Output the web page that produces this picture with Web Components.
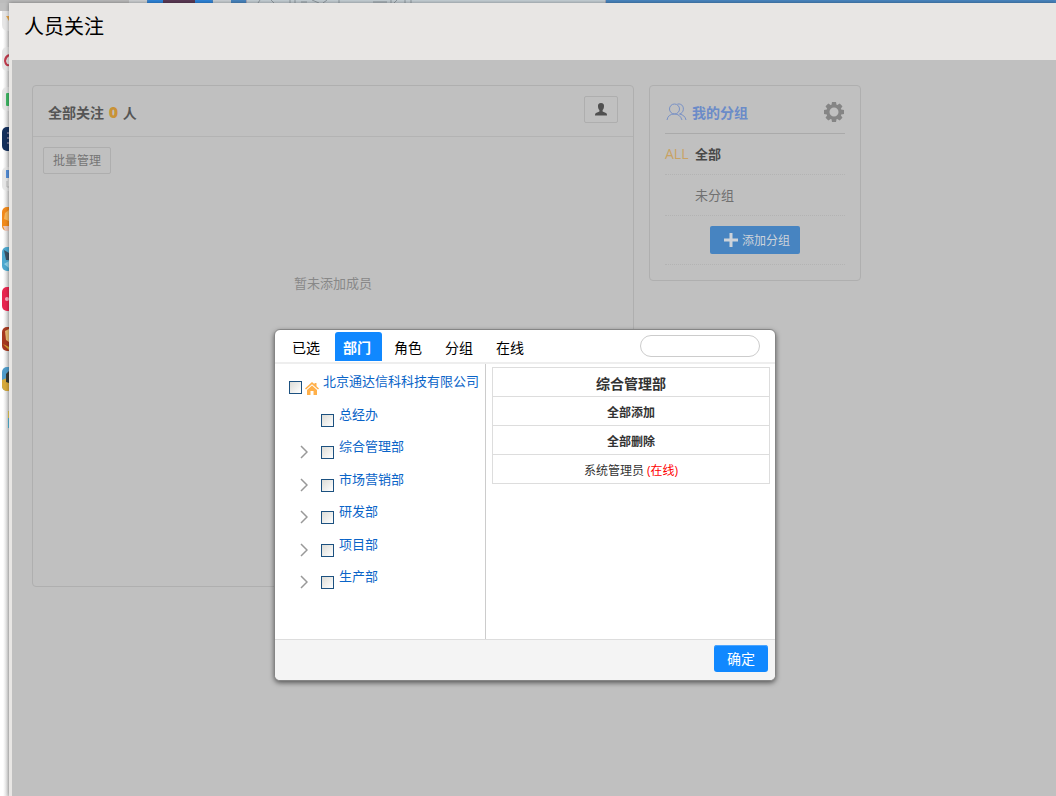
<!DOCTYPE html>
<html lang="zh-CN">
<head>
<meta charset="utf-8">
<title>人员关注</title>
<style>
html,body{margin:0;height:100%}
body{font-family:"Open Sans","Noto Sans CJK SC",sans-serif;background:#fff;color:#000}
</style>
</head>
<body>
<follow-page></follow-page>

<template id="t-page"><style>
:host{display:grid;grid-template:3px 1fr / 9px 1fr;min-height:100vh;overflow:hidden}
top-sliver{grid-column:1 / 3}
.win{display:flex;flex-direction:column;background:#e8e6e4;box-shadow:0 0 4px #0006;min-width:0}
h1{margin:0;padding:9px 15px 0;height:48px;font-size:20px;line-height:30px;font-weight:400}
.stage{position:relative;flex:1;display:flex;align-items:flex-start;gap:15px;margin-left:3px;padding:25px 20px;background:#c0c0c0}
follow-list{flex:0 1 602px}
group-panel{flex:0 0 212px}
person-picker{position:absolute;left:262px;top:269px}
</style>
<top-sliver></top-sliver>
<app-dock></app-dock>
<main class="win">
 <h1>人员关注</h1>
 <div class="stage"><follow-list></follow-list><group-panel></group-panel><person-picker></person-picker></div>
</main>
</template>

<template id="t-sliver"><style>
:host{display:flex;height:3px;background:#4a87c2}
.a{width:129px;background:#bcbcbc}.b{width:18px;background:#cfd2d4}
.c{width:66px}.d{width:18px;background:#ccd2d6}.e{width:15px;background:#4a87c2}
.f{width:358px;background:#c6d0d6;border:solid #aab;border-width:0 1px}
svg{display:block}
</style>
<div class="a"></div><div class="b"></div>
<svg class="c" width="66" height="3"><path d="M2 0H64L66 3H0Z" fill="#2f86dc"/><path d="M16 0H48V3H16Z" fill="#5c3a55"/></svg>
<div class="d"></div><div class="e"></div>
<div class="f"><svg width="200" height="3"><path d="M13 0L11 3M24 0L27 3M43 0V3M48 0V3M54 2H60M65 0L72 3M80 0L76 3M92 0V3M126 2H140M144 0V3M150 0L147 3M158 0V3M164 0V3" stroke="#929ba1" fill="none"/></svg></div>
</template>

<template id="t-dock"><style>
:host{display:block;background:linear-gradient(90deg,#fff 3px,#d2d2d2);overflow:hidden}
.cap{height:8px;background:#c0c0c0}
svg{display:block}
</style>
<div class="cap"></div>
<svg width="9" height="425" viewBox="0 11 9 425">
 <g fill="#e6e6e6"><path d="M9 11H2V25Q2 31 9 31Z"/><rect x="2" y="47" width="24" height="24" rx="5"/><rect x="2" y="87" width="24" height="24" rx="5"/><rect x="2" y="167" width="24" height="24" rx="5"/></g>
 <path d="M6 16H9V21Z" fill="#e9a94d"/>
 <path d="M9 55Q5 57 5 61Q6 66 9 65" stroke="#c13b4d" stroke-width="2" fill="none"/>
 <rect x="6" y="93" width="8" height="13" rx="1" fill="#3fb865"/>
 <rect x="2" y="127" width="24" height="24" rx="5" fill="#14305c"/><path d="M7 133H9M7 138H9M7 143H9" stroke="#b9a9c0"/>
 <rect x="6" y="170" width="9" height="8" fill="#5590da"/><path d="M7 181V187H9" stroke="#bbb" fill="none"/>
 <rect x="2" y="207" width="24" height="24" rx="5" fill="#f18a1c"/><path d="M5 213L9 210V221L4 219Z" fill="#f8b75b"/><path d="M3 226H9V231H5Z" fill="#e9c8bd"/>
 <rect x="2" y="247" width="24" height="24" rx="5" fill="#4da8cf"/><path d="M4 250L9 253V260H6Z" fill="#3b5366"/><path d="M4 264L9 261V268Z" fill="#8ed0e8"/>
 <rect x="2" y="287" width="24" height="24" rx="5" fill="#e8264f"/><circle cx="7" cy="299" r="2" fill="#f8b3c2"/>
 <rect x="2" y="327" width="24" height="24" rx="5" fill="#a63a20"/><path d="M5 331L9 329V342L6 340Z" fill="#e8bb72"/><path d="M3 344L9 347V350Z" fill="#d8a431"/>
 <rect x="2" y="367" width="24" height="24" rx="5" fill="#4f9cca"/><path d="M2 380L9 377V391H6Q2 390 2 386Z" fill="#d7a93a"/><path d="M6 374L9 371V383L6 382Z" fill="#363b36"/>
 <path d="M8 411H9V418H8Z" fill="#e8cc55"/><path d="M8 418H9V428H8Z" fill="#54b9dc"/>
</svg>
</template>

<template id="t-list"><style>
:host{display:block;box-sizing:border-box;min-width:0;min-height:502px;border:1px solid #afafaf;border-radius:4px;color:#555}
header{display:flex;align-items:flex-start;justify-content:space-between;box-sizing:border-box;height:51px;padding:10px 15px 0;border-bottom:1px solid #b3b3b3}
h2{margin:0;padding-top:6px;font-size:14px;line-height:20px}
h2 b{margin:0 1px;font-size:16px;color:#c99236}
button{box-sizing:border-box;display:block;font:12px/18px "Open Sans","Noto Sans CJK SC",sans-serif;color:#757575;background:none;border:1px solid #aeaeae;border-radius:2px;padding:0;height:27px}
.user{width:34px}.user svg{display:block;margin:auto}
.batch{width:68px;margin:10px}
p{margin:99px 0 0;text-align:center;font-size:13px;line-height:20px;color:#888}
</style>
<header><h2>全部关注 <b>0</b> 人</h2>
<button class="user" aria-label="人员"><svg width="12" height="13" viewBox="0 0 12 13"><path d="M6 0C3.700 0 2.800 1.400 3 3.500C3.100 5.300 3.700 6.300 4.400 7V8.500L1 10Q0 10.500 0 12V12.500H12V12Q12 10.500 11 10L7.600 8.500V7C8.300 6.300 8.900 5.300 9 3.500C9.200 1.400 8.300 0 6 0Z" fill="#505050"/></svg></button></header>
<button class="batch">批量管理</button>
<p>暂未添加成员</p>
</template>

<template id="t-group"><style>
:host{display:block;box-sizing:border-box;height:196px;padding:0 15px;border:1px solid #afafaf;border-radius:4px;font-size:13px;color:#707070}
header{display:flex;align-items:center;height:47px;border-bottom:1px solid #aaa}
h2{flex:1;margin:6px 0 0 5px;font-size:14px;line-height:20px;color:#6b8bc8}
.gear{padding:0;border:0;background:none;margin:4px 1px 0 0;height:20px}
.gear svg{display:block}
.people{display:block;margin:4px 0 0 1px}
.row{display:flex;height:40px;align-items:center;border-bottom:1px dotted #b3b3b3;line-height:20px}
.row span{width:30px;font-size:14px;color:#c9a263}
.all{color:#484848}
.add{height:48px;justify-content:center}
.add button{display:flex;align-items:center;justify-content:center;gap:4px;width:90px;height:28px;border:0;border-radius:2px;padding:2px 0 0;background:#4784c1;color:#cdd3da;font:12px/18px "Open Sans","Noto Sans CJK SC",sans-serif}
.add svg{margin:0 0 2px 4px}
a{color:inherit;text-decoration:none}
</style>
<header><svg class="people" width="21" height="18" viewBox="0 0 21 18" fill="none" stroke="#7891c6"><circle cx="8.500" cy="6" r="5"/><path d="M1 17Q2 11 8.500 11Q14 11 16 17M11.500 1C19 0 19 10 13.500 11Q19 12 20 17"/></svg>
<h2>我的分组</h2>
<button class="gear" aria-label="设置"><svg width="20" height="20" viewBox="-10 -10 20 20"><g fill="#858585"><path id="g" d="M-2 -10H2L3 -5H-3ZM-2 10H2L3 5H-3ZM-10 -2V2L-5 3V-3ZM10 -2V2L5 3V-3Z"/><use href="#g" transform="rotate(45)"/></g><circle r="6" fill="none" stroke="#858585" stroke-width="3"/></svg></button></header>
<div class="row all"><span>ALL</span><a href="#"><b>全部</b></a></div>
<div class="row"><span></span><a href="#">未分组</a></div>
<div class="row add"><button><svg width="14" height="14"><path d="M7 0V14M0 7H14" stroke="#cdd3da" stroke-width="3"/></svg>添加分组</button></div>
</template>

<template id="t-picker"><style>
:host{display:block;box-sizing:border-box;width:502px;border:1px solid #858585;border-radius:6px;background:#fff;box-shadow:0 2px 5px #0008;overflow:hidden}
.top{display:flex;height:32px;padding:0 15px 0 9px;border-bottom:2px solid #eee}
nav{display:flex;flex:1;gap:4px;padding-top:2px}
nav button{width:47px;height:29px;border:0;border-radius:3px 3px 0 0;padding:3px 11px 0 8px;white-space:nowrap;background:none;color:#000;font:14px/20px "Open Sans","Noto Sans CJK SC",sans-serif}
nav .on{background:#1088ff;color:#fff;font-weight:700}
input{box-sizing:border-box;width:120px;height:22px;margin-top:5px;padding:0 10px;border:1px solid #ccc;border-radius:11px;outline:0;font-size:12px}
.mid{display:flex;height:275px}
ul{box-sizing:border-box;display:grid;grid-template-rows:repeat(7,1fr);width:211px;margin:0;padding:7px 0 40px;border-right:1px solid #ccc;list-style:none}
.right{flex:1;padding:3px 5px 0 6px}
table{width:100%;border-collapse:collapse;color:#333;font-size:12px;line-height:18px}
td,th{height:28px;padding:0;border:1px solid #ddd;text-align:center}
td div,th div{padding-top:4px}
thead th{font-size:14px}
em{font-style:normal;color:#f00}
footer{display:flex;justify-content:flex-end;height:35px;padding:5px 7px 0;border-top:1px solid #ddd;background:#f4f4f4}
footer button{width:54px;height:27px;padding:0;border:0;border-radius:3px;background:#1088ff;box-shadow:inset 0 1px #4ba5ff;color:#fff;font:14px/20px "Open Sans","Noto Sans CJK SC",sans-serif}
</style>
<div class="top"><nav><button>已选</button><button class="on">部门</button><button>角色</button><button>分组</button><button>在线</button></nav><input type="text" aria-label="搜索"></div>
<div class="mid">
<ul>
<tree-row kind="root">北京通达信科科技有限公司</tree-row>
<tree-row kind="leaf">总经办</tree-row>
<tree-row kind="branch">综合管理部</tree-row>
<tree-row kind="branch">市场营销部</tree-row>
<tree-row kind="branch">研发部</tree-row>
<tree-row kind="branch">项目部</tree-row>
<tree-row kind="branch">生产部</tree-row>
</ul>
<div class="right"><table><thead><tr><th><div>综合管理部</div></th></tr></thead><tbody><tr><th><div>全部添加</div></th></tr><tr><th><div>全部删除</div></th></tr><tr><td><div>系统管理员 <em>(在线)</em></div></td></tr></tbody></table></div>
</div>
<footer><button>确定</button></footer>
</template>

<template id="t-row"><style>
:host{display:flex;align-items:flex-start;padding-left:14px;font-size:13px;line-height:20px;white-space:nowrap}
:host([kind=leaf]){padding-left:46px}
:host([kind=branch]){padding-left:25px}
input{appearance:none;box-sizing:border-box;flex:none;width:13px;height:13px;margin:10px 0 0;border:1px solid #1c5180;background:linear-gradient(135deg,#dcdcd7,#fff)}
svg{flex:none;display:none}
:host([kind=root]) .home{display:block;margin:11px 0 0 3px}
:host([kind=branch]) .chev{display:block;margin:9px 13px 0 0}
a{margin-left:5px;color:#0a64c8;text-decoration:none}
:host([kind=root]) a{margin-left:4px}
</style>
<svg class="chev" width="8" height="14"><path d="M1 1L7 7L1 13" fill="none" stroke="#999" stroke-width="1.500"/></svg>
<input type="checkbox" id="c" aria-labelledby="l">
<svg class="home" width="14" height="13" viewBox="0 0 14 13"><path d="M7 0L9.500 2.300V1H11.500V4.200L14 6.500L13 7.500L7 2.300L1 7.500L0 6.500ZM7 3.600L12 8V13H8.500V9H5.500V13H2V8Z" fill="#ffb04a"/></svg>
<a href="#" id="l"><slot></slot></a>
</template>

<script>
const register = (name, templateId) => customElements.define(name, class extends HTMLElement {
  constructor() {
    super();
    this.attachShadow({ mode: "open" }).append(document.getElementById(templateId).content.cloneNode(true));
  }
});
class TreeRow extends HTMLElement {
  constructor() {
    super();
    this.attachShadow({ mode: "open" }).append(document.getElementById("t-row").content.cloneNode(true));
  }
  connectedCallback() { this.setAttribute("role", "listitem"); }
}
customElements.define("tree-row", TreeRow);
register("top-sliver", "t-sliver");
register("app-dock", "t-dock");
register("follow-list", "t-list");
register("group-panel", "t-group");
register("person-picker", "t-picker");
register("follow-page", "t-page");
</script>
</body>
</html>
